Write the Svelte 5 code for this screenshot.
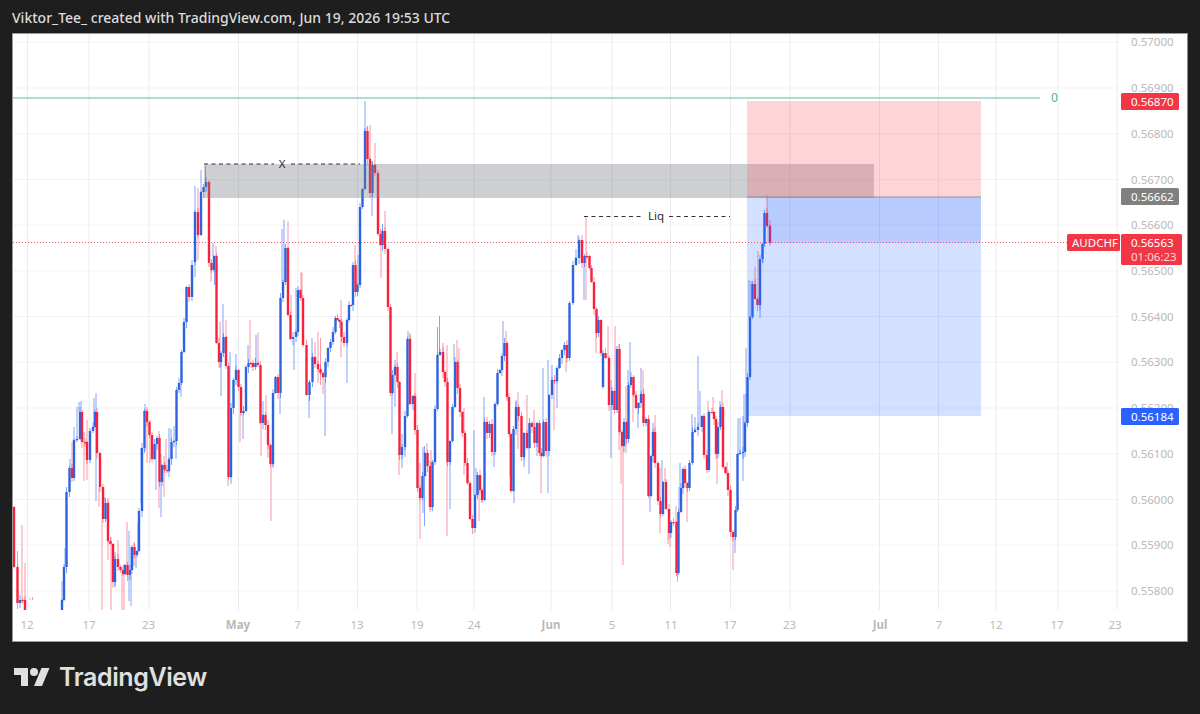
<script>
  const RAW = `14,507,567 17.5,567,603 20,603,600 22.5,600,600 25,600,612
  62,612,600 64,600,567 66.5,567,492 69.5,492,468 72,468,478 74,478,440 77,440,439 80,439,412 82,412,442 85,442,442 87,442,460 90,460,431 93,431,427 95,427,412
  97,412,453 100,453,487 103,487,519 105.5,519,503 108,503,541 110.5,541,544 113,544,582 115,582,559 118,559,567 120.5,567,570 123,570,574 125,574,565 127.5,565,575 130,575,570 132,570,547 134.5,547,555 137,555,551 139,551,511 142,511,448 144.5,448,411
  147,411,422 149.5,422,435 152,435,459 154.5,459,444 157,444,438 159.5,438,482 162,482,465 164.5,465,470 167,470,471 169,471,459 171.5,459,442 174,442,441 176.5,441,390 179,390,383 181.5,383,352 184,352,322 186.5,322,287 189,287,297 192,297,265 195,262,212 198,212,235 201,235,192 203.5,192,187 206,187,182
  209,182,263 211.5,263,270 214,270,256 216.5,256,343 219,343,362 221,362,353 223.5,353,337 226,337,366 228.5,366,477 231,477,408 233.5,408,380 236,380,370 238.5,370,387 241,387,413 243.5,413,411 246,411,367 248.5,367,363 251,363,363 253,363,367 255.5,367,363 258,363,365 260.5,365,423 263,423,415 265.5,415,425 268,425,445 270.5,445,464 273,464,393 275.5,393,377 278,377,393 280.5,393,298 283,298,282 285.5,282,248
  288,248,315 290.5,315,339 293,339,337 296,337,332 298,332,290 300.5,290,298 303,298,345 306.5,345,395 309.5,395,382 312.5,382,357 315,357,364 318,364,369 320.5,369,373 323,373,377 325.5,377,362 328,362,348 330.5,348,342 333,342,332 335.5,332,318 337.5,318,320 339.5,320,322 341.5,322,337 344,337,343 347,343,320 349,320,305 351,305,305 353,305,265 355.5,265,292 357.5,292,285 360,285,207 362.5,207,189 365,189,131 367.5,131,159 370,159,193 372.5,193,165 375,165,173 378,173,234 380.5,234,245 382.5,245,231 385,231,249 388,249,307 390.5,307,393 392.5,393,375 395,375,367 397.5,367,382 399.5,382,455 402,455,447 405,447,416 407.5,416,339 410,339,404 413,404,396 415,396,430 417.5,430,488 420,488,498 422.5,498,476 425,476,453 427.5,453,466 430,466,507 432.5,507,462 435,462,409 437.5,409,355 440,355,352 443,352,372 445,372,382 447.5,382,462 450,462,441 452.5,441,407 455,407,362 457.5,362,388 460,388,412 462.5,412,433 465,433,463 467.5,463,483 470,483,519 472.5,519,528 475,528,495 477.5,495,475 480,475,490 482,490,500 484.5,500,422 487,422,433 489.5,433,424 492,424,452 495,452,404 497.5,404,373 500,373,370 502,370,356 504.5,356,343 507,343,397 509,397,434 511,434,491 513.5,491,429 516,429,407 518.5,407,416 521.5,416,457 524,457,433 527,433,448 529.5,448,423 532,423,427 534.5,427,443 537,443,423 539.5,423,453 541.5,453,456 543.5,456,422 546,422,451 549,451,395 552,395,380 554.5,380,381 557,381,368 559.5,368,358 562,358,350 564.5,350,345 567,345,358 569.5,358,303 573,303,265 576,265,258 579,258,240 582,240,263 584.5,263,256 587,256,256 589.5,256,268 591.5,268,282 594,282,309 596.5,309,333 598.5,333,320 601,320,353 603,387,353 605.5,353,358 609,358,405 612,405,391 614.5,391,410 617,410,349 619.5,349,432 622,432,446 624,446,422 626.5,422,439 628.5,439,385 631,385,377 633.5,377,395 636,395,408 638.5,408,403 641,403,394 643.5,394,423 646,423,419 648.5,419,496 651,496,456 653,456,432 655,432,463 658,463,501 660.5,501,514 663,514,482 666,482,509 669,509,533 671,533,522 673.5,522,522 676.5,522,573 678.5,573,512 681,512,488 683,488,469 685,469,483 687.5,483,488 689.5,488,463 692.5,463,432 695,432,430 698,430,427 702,427,416 704,416,455 707,455,470 709,470,412 712,412,412 714,412,419 716,419,454 718,454,427 720.5,427,407 723,407,467 725.5,467,473 728,473,490 730.5,490,532 733,532,537 735.5,537,510 737.5,510,454 740,454,453 743,453,452 745,452,423 747.5,423,377 750,377,317 752.5,317,284 755,284,299 757.5,299,305 760,305,259 762.5,259,244 764.5,244,213 767,213,226 770,226,243`;

  const RAW_WICKS = `12.5,485,505 22,525,0 17.5,551,0 25,563,0 30,598,612 32.5,597,612 62,581,0 65,548,0 70,459,0 72,442,0 74,427,0 77,407,0 79,402,0 81,401,427 84,432,481 87,420,480 94,398,0 96,393,501 99,0,507 102,0,612 105,497,0 108,498,560 111,537,612 115,552,586 118,540,0 124,564,612 122,0,612 127,522,0 129,531,601 131,547,606 134,542,566 136,0,568 138,523,0 141,503,0 145,404,451 147,409,463 150,420,463 156,0,490 159,431,508 161,454,517 164,456,497 166,439,0 169,428,477 171,429,0 174,426,0 176,0,459 181,0,397 221,396,0 228,0,486 231,0,484 240,0,442 243,0,439 261,0,456 263,401,0 266,395,0 268,0,458 271,0,521 273,0,468 280,0,414 195,186,277 198,188,260 201,170,0 205.5,166,0 211,0,282 213,243,0 214.5,0,285 216,246,0 220,322,368 223,304,0 226,320,0 230,352,0 236,354,0 248,345,0 250,320,0 256,335,0 258,332,0 282,229,0 284,220,0 288,221,0 291,295,0 294,0,370 296,288,0 302,273,0 301,272,0 341,300,357 347,0,383 355,245,0 358,255,0 365,101,0 367,127,0 370,125,0 375,143,0 372,161,216 381,0,278 382.5,224,0 385,211,0 576,249,0 578,235,0 586,217,300 584,0,300 309,0,418 312,338,0 315,342,0 318,332,383 320.5,338,385 323,0,394 325,0,436 392,0,434 395,360,407 397,352,0 399,0,475 402,434,468 405,0,457 408,331,0 410,333,0 415,373,0 420,463,539 423,447,513 424.5,446,526 427,443,0 431,450,510 437.5,327,0 439.5,316,0 443,343,0 447,345,536 450,0,509 454,344,0 457,340,0 459,348,0 464,408,475 474,430,0 476,468,0 479,0,521 482,0,503 484,397,0 487,417,0 494,0,467 503,321,0 506,331,0 510,0,477 514,0,503 516,400,0 518,392,449 524,0,467 527,395,0 529,0,474 534,410,0 537,0,456 541,0,493 543,368,0 548,360,493 552,365,0 554,0,430 557,0,408 566,0,372 596,0,353 608,326,0 611,380,458 615,326,0 619,344,450 621,0,484 623,0,565 626,386,453 628,370,0 630,342,0 633,383,422 638,0,428 641,368,0 643,370,0 650,0,512 653,423,0 655,415,0 660,468,533 662,460,0 665,468,0 668,0,544 670,0,547 676,506,0 677.5,0,582 679,487,0 680,463,0 687,0,522 692,414,0 695,417,0 698,356,0 700,391,0 708,401,0 713,397,0 717,0,484 720,401,0 722,390,0 727,462,0 733,0,570 735,0,553 738,418,497 743,416,481 746,394,0 740,418,0 744,394,0 746,348,0 749,280,0 751,281,0 755,267,0 758,251,0 760,0,318 763,0,263 767,195,0 770,220,246`;

  const candles = RAW.trim().split(/\s+/).map((s, i) => {
    const [x, o, c] = s.split(',').map(Number);
    const top = Math.min(o, c);
    const bottom = Math.max(o, c);
    return {
      x, top, bottom, up: c < o,
      hi: top - (1 + (i * 7) % 5),
      lo: bottom + (1 + (i * 11) % 6)
    };
  });

  const nearest = (x) =>
    candles.reduce((a, b) => (Math.abs(b.x - x) < Math.abs(a.x - x) ? b : a));

  const wicks = RAW_WICKS.trim().split(/\s+/).flatMap((s) => {
    const [x, h, l] = s.split(',').map(Number);
    const n = nearest(x);
    const out = [];
    if (h) out.push({ x, y1: h, y2: n.top, up: n.up });
    if (l) out.push({ x, y1: n.bottom, y2: l, up: n.up });
    return out;
  });

  const hLines = [42, 88, 134, 179.5, 225, 271, 316.5, 362, 408, 454, 499.5, 545, 591];
  const vLines = [27.5, 89, 149, 238.5, 298, 357.5, 417, 474, 551, 612, 670.5, 730.5, 790, 879.5, 938.5, 996, 1058, 1117];
  const prices = [
    ['0.57000', 42], ['0.56900', 88], ['0.56800', 134], ['0.56700', 179.5], ['0.56600', 225],
    ['0.56500', 271], ['0.56400', 316.5], ['0.56300', 362], ['0.56200', 408], ['0.56100', 454],
    ['0.56000', 499.5], ['0.55900', 545], ['0.55800', 591]
  ];
  const times = [
    ['12', 27, 0], ['17', 89, 0], ['23', 148.5, 0], ['May', 238, 1], ['7', 297.5, 0], ['13', 357, 0],
    ['19', 417, 0], ['24', 474, 0], ['Jun', 551, 1], ['5', 612, 0], ['11', 671, 0], ['17', 730, 0],
    ['23', 789.5, 0], ['Jul', 880, 1], ['7', 939, 0], ['12', 996, 0], ['17', 1057, 0], ['23', 1115, 0]
  ];
</script>

<div class="page">
  <header class="head">Viktor_Tee_ created with TradingView.com, Jun 19, 2026 19:53 UTC</header>

  <div class="panel">
    <svg class="chart" viewBox="13 34 1174 606" width="1174" height="606" role="img" aria-label="AUDCHF chart">
      <defs>
        <clipPath id="pane"><rect x="13" y="34" width="1105" height="576" /></clipPath>
      </defs>

      {#each hLines as y}
        <line class="grid-h" x1="13" x2="1119" y1={y} y2={y} />
      {/each}
      {#each vLines as x}
        <line class="grid-v" x1={x} x2={x} y1="34" y2="610" />
      {/each}

      <g clip-path="url(#pane)">
        {#each wicks as w}
          <line class={w.up ? 'wick up' : 'wick down'} x1={w.x} x2={w.x} y1={w.y1} y2={w.y2} />
        {/each}
        {#each candles as c}
          <line class={c.up ? 'wick up' : 'wick down'} x1={c.x} x2={c.x} y1={c.hi} y2={c.lo} />
        {/each}
        {#each candles as c}
          <rect class={c.up ? 'body up' : 'body down'} x={c.x - 1.2} y={c.top} width="2.4" height={Math.max(c.bottom - c.top, 1.2)} />
        {/each}
      </g>

      <rect class="zone-grey" x="204" y="164" width="670" height="34" />
      <rect class="zone-red" x="747" y="101" width="234" height="96" />
      <rect class="zone-blue" x="747" y="197" width="234" height="219" />
      <rect class="zone-blue2" x="767" y="197" width="214" height="46" />
      <line class="zone-edge" x1="747" x2="981" y1="197" y2="197" />

      <line class="level" x1="13" x2="1040" y1="98" y2="98" />
      <text class="level-label" x="1051" y="101.5">0</text>

      <line class="last" x1="13" x2="1067" y1="242.5" y2="242.5" />

      <line class="dash" x1="204" x2="274" y1="164" y2="164" />
      <line class="dash" x1="291" x2="360" y1="164" y2="164" />
      <text class="note" x="282" y="167.5">X</text>

      <line class="dash" x1="584" x2="641" y1="216.5" y2="216.5" />
      <line class="dash" x1="669" x2="730" y1="216.5" y2="216.5" />
      <text class="note" x="656" y="220">Liq</text>

      {#each prices as [label, y]}
        <text class="price" x="1131" y={y + 4}>{label}</text>
      {/each}
      {#each times as [label, x, bold]}
        <text class={bold ? 'time bold' : 'time'} x={x} y="628.5">{label}</text>
      {/each}

      <rect class="tag red" x="1121" y="93" width="58" height="17" rx="1.5" />
      <text class="tag-text" x="1131" y="106">0.56870</text>

      <rect class="tag grey" x="1121" y="188" width="58" height="17" rx="1.5" />
      <text class="tag-text" x="1131" y="201">0.56662</text>

      <rect class="tag red" x="1067" y="234" width="53" height="17" rx="1.5" />
      <text class="tag-text" x="1072" y="247">AUDCHF</text>

      <rect class="tag red" x="1121" y="234" width="61" height="31" rx="1.5" />
      <text class="tag-text" x="1131" y="247">0.56563</text>
      <text class="tag-text dim" x="1131" y="261">01:06:23</text>

      <rect class="tag blue" x="1121" y="408" width="58" height="17" rx="1.5" />
      <text class="tag-text" x="1131" y="421">0.56184</text>
    </svg>
  </div>

  <footer class="foot">
    <svg class="logo" viewBox="0 0 36 28" width="36" height="28" aria-hidden="true">
      <path d="M14 22H7V11H0V4h14v18zM28 22h-8l7.5-18h8L28 22z" />
      <circle cx="20" cy="8" r="4" />
    </svg>
    <span class="brand">TradingView</span>
  </footer>
</div>

<style>
  :global(body) {
    margin: 0;
    background: #1e1e1e;
  }
  .page {
    width: 1200px;
    height: 714px;
    background: #1e1e1e;
    display: flex;
    flex-direction: column;
    overflow: hidden;
  }
  .head {
    height: 33px;
    flex: none;
    box-sizing: border-box;
    padding: 8px 0 0 12px;
    color: #dcdcdc;
    font: 500 14px/20px "Noto Sans", sans-serif;
  }
  .panel {
    flex: none;
    box-sizing: border-box;
    width: 1176px;
    height: 609px;
    margin-left: 12px;
    background: #fff;
    border: 1px solid #9a9a9a;
    border-right-color: #8a8a8a;
  }
  .chart {
    display: block;
  }
  .grid-h {
    stroke: #f3f3f4;
    stroke-width: 1;
  }
  .grid-v {
    stroke: #ececee;
    stroke-width: 1;
  }
  .wick {
    stroke-width: 1;
  }
  .wick.up {
    stroke: #2f6bf5;
    stroke-opacity: 0.6;
  }
  .wick.down {
    stroke: #f5304a;
    stroke-opacity: 0.5;
  }
  .body.up {
    fill: #2d63de;
  }
  .body.down {
    fill: #f7213b;
  }
  .zone-grey {
    fill: #787b86;
    fill-opacity: 0.36;
  }
  .zone-red {
    fill: #f7525f;
    fill-opacity: 0.25;
  }
  .zone-blue {
    fill: #2962ff;
    fill-opacity: 0.2;
  }
  .zone-blue2 {
    fill: #2962ff;
    fill-opacity: 0.16;
  }
  .zone-edge {
    stroke: #8f8f92;
    stroke-width: 1;
  }
  .level {
    stroke: #62bba5;
    stroke-width: 1.2;
  }
  .level-label {
    fill: #4fb3a0;
    font: 12px "Noto Sans", sans-serif;
  }
  .last {
    stroke: #f23645;
    stroke-width: 1;
    stroke-dasharray: 1 2;
    opacity: 0.8;
  }
  .dash {
    stroke: #333;
    stroke-width: 1;
    stroke-dasharray: 4 3.5;
  }
  .note {
    fill: #2a2a2a;
    font: 11.5px "Noto Sans", sans-serif;
    text-anchor: middle;
  }
  .price {
    fill: #b9b9b9;
    font: 11.5px "Noto Sans", sans-serif;
  }
  .time {
    fill: #b9b9b9;
    font: 11.5px "Noto Sans", sans-serif;
    text-anchor: middle;
  }
  .time.bold {
    font-weight: 700;
  }
  .tag.red {
    fill: #f23645;
  }
  .tag.grey {
    fill: #808080;
  }
  .tag.blue {
    fill: #2962ff;
  }
  .tag-text {
    fill: #fff;
    font: 11.5px "Noto Sans", sans-serif;
  }
  .tag-text.dim {
    fill: #ffd5d9;
  }
  .foot {
    flex: 1;
    display: flex;
    align-items: center;
    gap: 9px;
    padding: 0 0 1px 14px;
    color: #e0e0e0;
  }
  .logo {
    flex: none;
    fill: #e0e0e0;
  }
  .brand {
    font: 600 25px/1 "Inter", sans-serif;
    letter-spacing: -0.4px;
    color: #e0e0e0;
  }
</style>
